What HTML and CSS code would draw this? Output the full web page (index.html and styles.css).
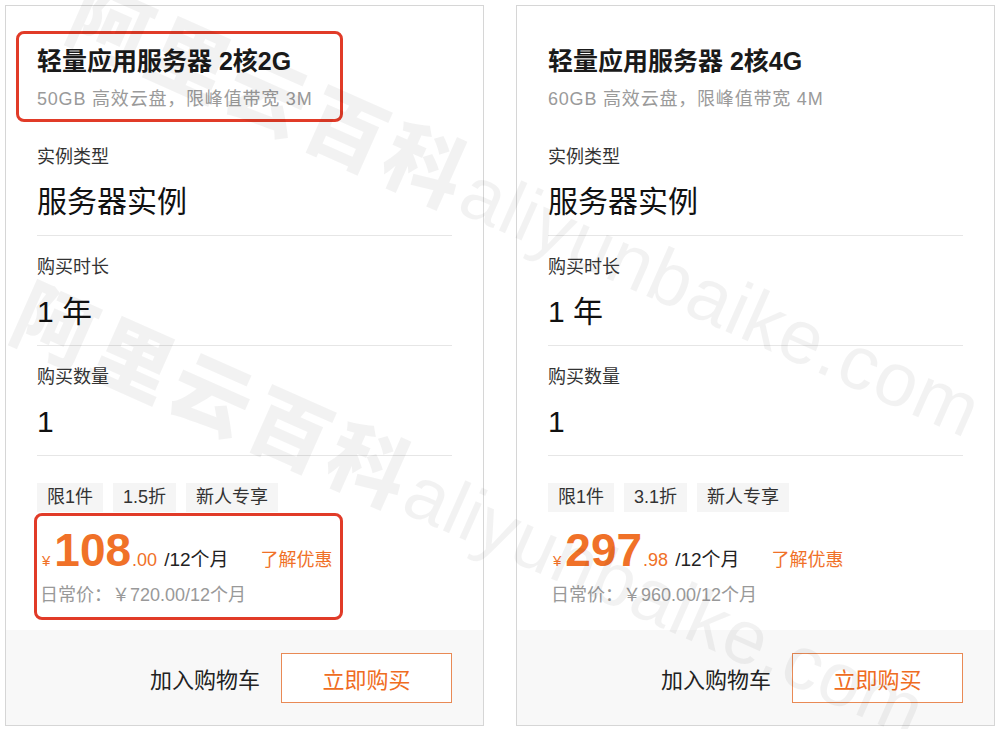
FILE: index.html
```html
<!DOCTYPE html>
<html lang="zh-CN">
<head>
    <meta charset="UTF-8" />
    <meta name="viewport" content="width=device-width, initial-scale=1.0">
    <title>轻量应用服务器</title>
    <link rel="stylesheet" href="styles.css">
</head>
<body>
    <div class="card">
        <div class="card-body">
            <div class="head marked">
                <p class="title">轻量应用服务器 2核2G</p>
                <p class="sub">50GB 高效云盘，限峰值带宽 3M</p>
            </div>
            <div class="row">
                <p class="label">实例类型</p>
                <p class="value">服务器实例</p>
            </div>
            <div class="row">
                <p class="label">购买时长</p>
                <p class="value">1 年</p>
            </div>
            <div class="row">
                <p class="label">购买数量</p>
                <p class="value">1</p>
            </div>
            <div class="tags">
                <span class="tag">限1件</span>
                <span class="tag">1.5折</span>
                <span class="tag">新人专享</span>
            </div>
            <div class="price-box marked">
                <div class="price-line">
                    <span class="yen">¥</span>
                    <span class="big">108</span>
                    <span class="cents">.00</span>
                    <span class="unit">/12个月</span>
                    <span class="link">了解优惠</span>
                </div>
                <p class="old">日常价：￥720.00/12个月</p>
            </div>
        </div>
        <div class="card-foot">
            <span class="cart">加入购物车</span>
            <button class="buy">立即购买</button>
        </div>
    </div>

    <div class="card">
        <div class="card-body">
            <div class="head">
                <p class="title">轻量应用服务器 2核4G</p>
                <p class="sub">60GB 高效云盘，限峰值带宽 4M</p>
            </div>
            <div class="row">
                <p class="label">实例类型</p>
                <p class="value">服务器实例</p>
            </div>
            <div class="row">
                <p class="label">购买时长</p>
                <p class="value">1 年</p>
            </div>
            <div class="row">
                <p class="label">购买数量</p>
                <p class="value">1</p>
            </div>
            <div class="tags">
                <span class="tag">限1件</span>
                <span class="tag">3.1折</span>
                <span class="tag">新人专享</span>
            </div>
            <div class="price-box">
                <div class="price-line">
                    <span class="yen">¥</span>
                    <span class="big">297</span>
                    <span class="cents">.98</span>
                    <span class="unit">/12个月</span>
                    <span class="link">了解优惠</span>
                </div>
                <p class="old">日常价：￥960.00/12个月</p>
            </div>
        </div>
        <div class="card-foot">
            <span class="cart">加入购物车</span>
            <button class="buy">立即购买</button>
        </div>
    </div>

    <!-- watermark -->
    <svg class="watermark" width="1000" height="729" viewBox="0 0 1000 729">
        <g transform="rotate(24 62 36)">
            <text x="62" y="36"><tspan class="wm-cn">阿里云百科</tspan><tspan class="wm-en">aliyunbaike.com</tspan></text>
        </g>
        <g transform="rotate(24 6 336)">
            <text x="6" y="336"><tspan class="wm-cn">阿里云百科</tspan><tspan class="wm-en">aliyunbaike.com</tspan></text>
        </g>
    </svg>
</body>
</html>
```

FILE: styles.css
```css
body {
    margin: 0;
    padding: 5px;
    display: flex;
    gap: 32px;
    background-color: #fff;
    color: #222;
    font-family: "Liberation Sans", "Noto Sans CJK SC", sans-serif;
    position: relative;
}

p {
    margin: 0;
}

.card {
    width: 479px;
    height: 721px;
    box-sizing: border-box;
    border: 1px solid #d6d6d6;
    display: flex;
    flex-direction: column;
}

.card-body {
    padding: 0 31px;
}

.head {
    width: 327px;
    box-sizing: border-box;
    margin: 25px 0 4px -21px;
    padding: 12px 18px 9px;
    border: 3px solid transparent;
    border-radius: 8px;
}

.marked {
    border-color: #e13b28;
}

.title {
    font-size: 25px;
    line-height: 30px;
    font-weight: 600;
    color: #1a1a1a;
}

.sub {
    margin-top: 12px;
    font-size: 18px;
    line-height: 22px;
    letter-spacing: 0.8px;
    color: #9a9a9a;
}

.row {
    padding: 19px 0 13px;
    border-bottom: 1px solid #e6e6e6;
}

.label {
    font-size: 18px;
    line-height: 24px;
    color: #333;
}

.value {
    margin-top: 13px;
    font-size: 30px;
    line-height: 40px;
    color: #111;
}

.tags {
    display: flex;
    gap: 10px;
    margin-top: 27px;
}

.tag {
    padding: 0 10px;
    background-color: #f5f5f5;
    font-size: 18px;
    line-height: 29px;
    color: #333;
}

.price-box {
    width: 309px;
    box-sizing: border-box;
    margin: 1px 0 0 -3px;
    padding: 11px 0 11px 3px;
    border: 3px solid transparent;
    border-radius: 8px;
}

.price-box.marked {
    border-color: #e13b28;
}

.price-line {
    display: flex;
    align-items: baseline;
    color: #f07128;
}

.price-line span {
    line-height: 1;
}

.yen {
    font-size: 15px;
    margin: 0 4px 0 2px;
}

.big {
    font-size: 46px;
    font-weight: 600;
}

.cents {
    font-size: 18px;
    margin-left: 1px;
}

.unit {
    font-size: 19px;
    margin-left: 7px;
    color: #222;
}

.link {
    font-size: 18px;
    margin-left: 32px;
}

.old {
    margin-top: 11px;
    font-size: 18px;
    line-height: 22px;
    color: #999;
}

.card-foot {
    margin-top: auto;
    height: 95px;
    padding: 0 31px;
    background-color: #f8f8f8;
    display: flex;
    justify-content: flex-end;
    align-items: center;
    gap: 21px;
}

.cart {
    font-size: 22px;
    color: #222;
}

.buy {
    width: 171px;
    height: 50px;
    background-color: #fff;
    border: 1px solid #e98a55;
    color: #ef6c22;
    font-family: inherit;
    font-size: 22px;
    cursor: pointer;
}

.watermark {
    position: absolute;
    top: 0;
    left: 0;
    pointer-events: none;
}

.watermark text {
    fill: rgba(0, 0, 0, 0.05);
    font-size: 72px;
}

.wm-cn {
    font-size: 80px;
    font-weight: 900;
    letter-spacing: 6px;
}

.wm-en {
    font-size: 76px;
    letter-spacing: 1px;
}
```
